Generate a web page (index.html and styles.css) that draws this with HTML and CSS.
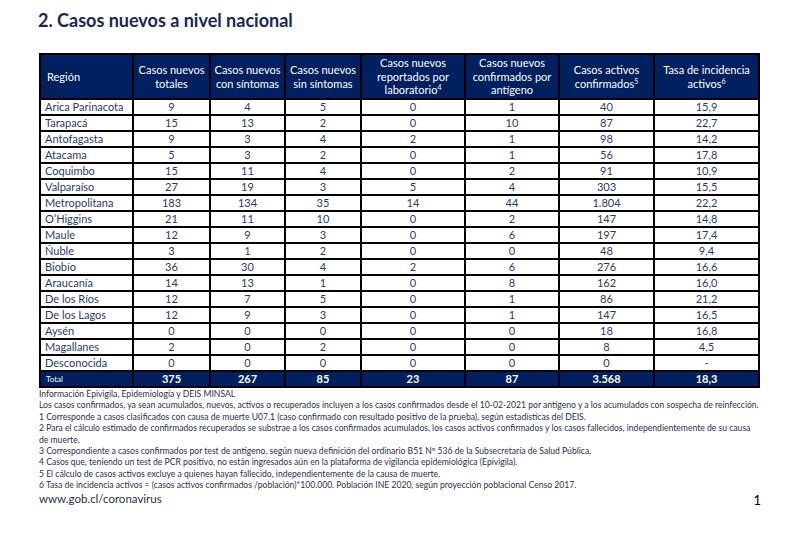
FILE: index.html
```html
<!DOCTYPE html>
<html lang="es">
<head>
<meta charset="utf-8">
<link rel="stylesheet" href="styles.css">
</head>
<body>
<div class="page">
  <h1 class="title">2. Casos nuevos a nivel nacional</h1>
  <table class="data">
    <colgroup>
      <col class="c1"><col class="c2"><col class="c3"><col class="c4"><col class="c5"><col class="c6"><col class="c7"><col class="c8">
    </colgroup>
    <thead>
      <tr>
        <th class="left">Región</th>
        <th>Casos nuevos<br>totales</th>
        <th>Casos nuevos<br>con síntomas</th>
        <th>Casos nuevos<br>sin síntomas</th>
        <th>Casos nuevos<br>reportados por<br>laboratorio<sup>4</sup></th>
        <th>Casos nuevos<br>confirmados por<br>antígeno</th>
        <th>Casos activos<br>confirmados<sup>5</sup></th>
        <th>Tasa de incidencia<br>activos<sup>6</sup></th>
      </tr>
    </thead>
    <tbody>
      <tr><td class="left">Arica Parinacota</td><td>9</td><td>4</td><td>5</td><td>0</td><td>1</td><td>40</td><td>15,9</td></tr>
      <tr><td class="left">Tarapacá</td><td>15</td><td>13</td><td>2</td><td>0</td><td>10</td><td>87</td><td>22,7</td></tr>
      <tr><td class="left">Antofagasta</td><td>9</td><td>3</td><td>4</td><td>2</td><td>1</td><td>98</td><td>14,2</td></tr>
      <tr><td class="left">Atacama</td><td>5</td><td>3</td><td>2</td><td>0</td><td>1</td><td>56</td><td>17,8</td></tr>
      <tr><td class="left">Coquimbo</td><td>15</td><td>11</td><td>4</td><td>0</td><td>2</td><td>91</td><td>10,9</td></tr>
      <tr><td class="left">Valparaíso</td><td>27</td><td>19</td><td>3</td><td>5</td><td>4</td><td>303</td><td>15,5</td></tr>
      <tr><td class="left">Metropolitana</td><td>183</td><td>134</td><td>35</td><td>14</td><td>44</td><td>1.804</td><td>22,2</td></tr>
      <tr><td class="left">O’Higgins</td><td>21</td><td>11</td><td>10</td><td>0</td><td>2</td><td>147</td><td>14,8</td></tr>
      <tr><td class="left">Maule</td><td>12</td><td>9</td><td>3</td><td>0</td><td>6</td><td>197</td><td>17,4</td></tr>
      <tr><td class="left">Ñuble</td><td>3</td><td>1</td><td>2</td><td>0</td><td>0</td><td>48</td><td>9,4</td></tr>
      <tr><td class="left">Biobío</td><td>36</td><td>30</td><td>4</td><td>2</td><td>6</td><td>276</td><td>16,6</td></tr>
      <tr><td class="left">Araucanía</td><td>14</td><td>13</td><td>1</td><td>0</td><td>8</td><td>162</td><td>16,0</td></tr>
      <tr><td class="left">De los Ríos</td><td>12</td><td>7</td><td>5</td><td>0</td><td>1</td><td>86</td><td>21,2</td></tr>
      <tr><td class="left">De los Lagos</td><td>12</td><td>9</td><td>3</td><td>0</td><td>1</td><td>147</td><td>16,5</td></tr>
      <tr><td class="left">Aysén</td><td>0</td><td>0</td><td>0</td><td>0</td><td>0</td><td>18</td><td>16,8</td></tr>
      <tr><td class="left">Magallanes</td><td>2</td><td>0</td><td>2</td><td>0</td><td>0</td><td>8</td><td>4,5</td></tr>
      <tr><td class="left">Desconocida</td><td>0</td><td>0</td><td>0</td><td>0</td><td>0</td><td>0</td><td>-</td></tr>
    </tbody>
    <tfoot>
      <tr><td class="left total-label">Total</td><td>375</td><td>267</td><td>85</td><td>23</td><td>87</td><td>3.568</td><td>18,3</td></tr>
    </tfoot>
  </table>
  <div class="notes">
    <p>Información Epivigila, Epidemiología y DEIS MINSAL</p>
    <p>Los casos confirmados, ya sean acumulados, nuevos, activos o recuperados incluyen a los casos confirmados desde el 10-02-2021 por antígeno y a los acumulados con sospecha de reinfección.</p>
    <p>1 Corresponde a casos clasificados con causa de muerte U07.1 (caso confirmado con resultado positivo de la prueba), según estadísticas del DEIS.</p>
    <p>2 Para el cálculo estimado de confirmados recuperados se substrae a los casos confirmados acumulados, los casos activos confirmados y los casos fallecidos, independientemente de su causa<br>de muerte.</p>
    <p>3 Correspondiente a casos confirmados por test de antigeno, según nueva definición del ordinario B51 Nº 536 de la Subsecretaría de Salud Pública.</p>
    <p>4 Casos que, teniendo un test de PCR positivo, no están ingresados aún en la plataforma de vigilancia epidemiológica (Epivigila).</p>
    <p>5 El cálculo de casos activos excluye a quienes hayan fallecido, independientemente de la causa de muerte.</p>
    <p>6 Tasa de incidencia activos = (casos activos confirmados /población)*100.000. Población INE 2020, según proyección poblacional Censo 2017.</p>
  </div>
  <div class="bottom">
    <span class="site">www.gob.cl/coronavirus</span>
    <span class="pagenum">1</span>
  </div>
</div>
</body>
</html>
```
FILE: styles.css
```css
html, body {
  margin: 0;
  padding: 0;
  background: #ffffff;
}
body {
  font-family: Lato, "Open Sans", sans-serif;
}
.page {
  width: 801px;
  height: 533px;
  box-sizing: border-box;
  padding: 8px 0 0 38px;
}
.title {
  margin: 0 0 21px 0;
  font-size: 18px;
  line-height: 24px;
  font-weight: 700;
  color: #13295c;
}
.data {
  margin-left: 1px;
  width: 719px;
  table-layout: fixed;
  border-collapse: collapse;
  border: 2px solid #000;
}
.c1 { width: 93px; }
.c2 { width: 77px; }
.c3 { width: 75px; }
.c4 { width: 76px; }
.c5 { width: 104px; }
.c6 { width: 94px; }
.c7 { width: 95px; }
.c8 { width: 105px; }
.data th, .data td {
  border: 2px solid #000;
  padding: 0;
  text-align: center;
  white-space: nowrap;
  overflow: hidden;
}
.data th {
  background: #002060;
  color: #ffffff;
  font-weight: 400;
  font-size: 11px;
  line-height: 13.5px;
  height: 43px;
}
.data th sup {
  font-size: 7px;
  line-height: 0;
  vertical-align: 4px;
}
.data th.left {
  text-align: left;
  padding-left: 6px;
}
.data td {
  height: 14px;
  font-size: 11px;
  line-height: 14px;
  color: #1f3a78;
}
.data td.left {
  text-align: left;
  padding-left: 4px;
}
.data tfoot td {
  background: #002060;
  color: #ffffff;
  font-weight: 700;
}
.data tfoot td.total-label {
  font-size: 8px;
  font-weight: 400;
  padding-left: 5px;
}
.notes {
  margin-top: 1px;
  margin-left: 1px;
  color: #1f2f55;
  font-size: 8.6px;
  line-height: 11.4px;
}
.notes p {
  margin: 0;
  white-space: nowrap;
}
.bottom {
  display: flex;
  justify-content: space-between;
  align-items: baseline;
  width: 722px;
  margin-left: 1px;
  margin-top: -2px;
}
.site {
  font-size: 11.5px;
  color: #1f2f55;
}
.pagenum {
  font-size: 13px;
  color: #000;
  position: relative;
  top: 2px;
}
```
